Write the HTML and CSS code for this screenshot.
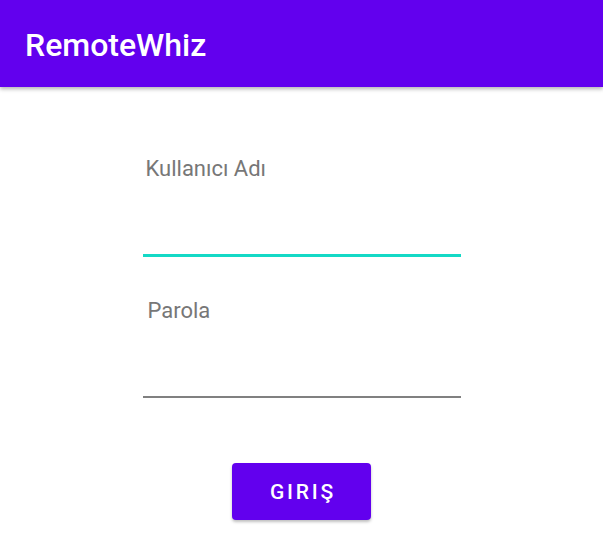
FILE: index.html
```html
<!DOCTYPE html>
<html>
<head>
<meta charset="utf-8">
<link rel="stylesheet" href="styles.css">
</head>
<body>
<header class="appbar"><h1 class="title">RemoteWhiz</h1></header>
<main class="content">
  <div class="field field-focused">
    <label class="label">Kullanıcı Adı</label>
    <div class="line line-teal"></div>
  </div>
  <div class="field field-pass">
    <label class="label label-pass">Parola</label>
    <div class="line line-gray"></div>
  </div>
  <button class="btn">GIRIŞ</button>
</main>
</body>
</html>
```
FILE: styles.css
```css
html, body { margin: 0; padding: 0; background: #fff; }
body { font-family: Roboto, "Noto Sans", sans-serif; width: 603px; height: 544px; overflow: hidden; }
.appbar {
  height: 87px;
  background: #6200ee;
  box-shadow: 0 2px 4px rgba(0,0,0,0.3);
  display: flex;
  align-items: center;
  padding-left: 25px;
  position: relative;
  z-index: 1;
}
.title { margin: 0; color: #fff; font-size: 32px; font-weight: 500; line-height: 38px; padding-top: 2px; }
.content { display: flex; flex-direction: column; align-items: center; padding-top: 69px; }
.field { width: 318px; display: flex; flex-direction: column; }
.label { font-size: 22px; color: #777; padding-left: 3px; line-height: 26px; }
.label-pass { padding-left: 5px; }
.line-teal { height: 3px; background: #14d9c6; margin-top: 72px; }
.line-gray { height: 2px; background: #808080; margin-top: 72px; }
.field-pass { margin-top: 41px; }
.btn {
  margin-top: 65px;
  width: 139px; height: 57px;
  background: #6200ee;
  color: #fff;
  border: none;
  border-radius: 4px;
  font-family: Roboto, sans-serif;
  font-size: 21px; font-weight: 500;
  letter-spacing: 2.8px;
  box-shadow: 0 2px 3px rgba(0,0,0,0.25);
  padding: 0 0 0 3px;
}
```
